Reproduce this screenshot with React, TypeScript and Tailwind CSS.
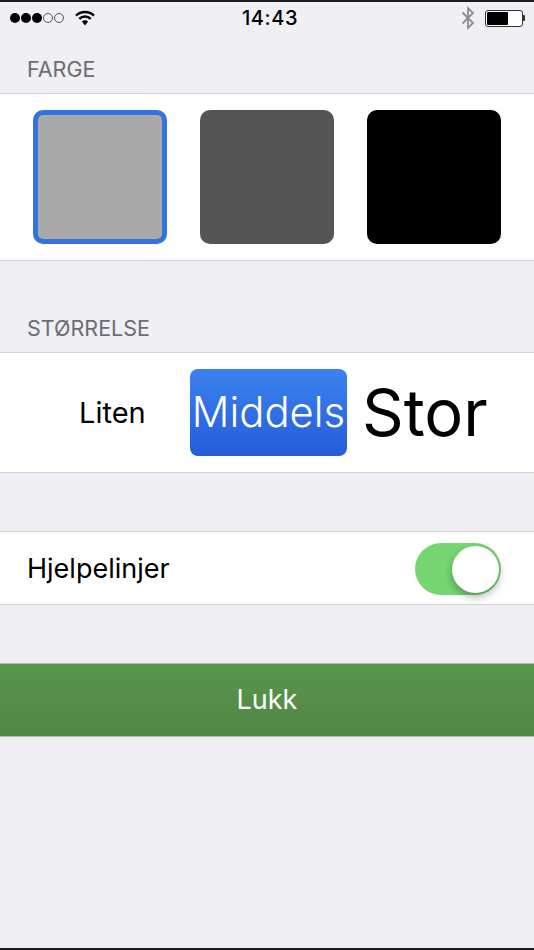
const font = "font-['Inter','Liberation_Sans',sans-serif]";

function StatusBar() {
  return (
    <div className="relative h-[36px] border-t-2 border-[#1c1c1e] pb-[2px] flex items-center justify-between pl-[10px] pr-[9px]">
      <div className="flex items-center gap-[1px]">
        <span className="w-[10px] h-[10px] rounded-full bg-black" />
        <span className="w-[10px] h-[10px] rounded-full bg-black" />
        <span className="w-[10px] h-[10px] rounded-full bg-black" />
        <span className="w-[10px] h-[10px] rounded-full border border-[#555]" />
        <span className="w-[10px] h-[10px] rounded-full border border-[#555]" />
        <svg width="20" height="16" viewBox="0 0 20 16" className="ml-[10px]">
          <path d="M1 5.6 A13 13 0 0 1 19 5.6" fill="none" stroke="#000" strokeWidth="2.4" />
          <path d="M4.3 8.8 A8.2 8.2 0 0 1 15.7 8.8" fill="none" stroke="#000" strokeWidth="2.4" />
          <path d="M6.9 11.6 A4.6 4.6 0 0 1 13.1 11.6 L10 15.6 Z" fill="#000" />
        </svg>
      </div>
      <span className="absolute left-[6px] right-0 text-center text-[20px] font-medium text-black tracking-[0.6px]">14:43</span>
      <div className="flex items-center gap-[10px]">
        <svg width="14" height="24" viewBox="0 0 14 24">
          <path d="M1.5 6.5 L12 17 L7 22 L7 2 L12 7 L1.5 17.5" fill="none" stroke="#8e8e93" strokeWidth="1.8" />
        </svg>
        <div className="flex items-center">
          <div className="w-[38px] h-[17px] rounded-[3px] border border-[#333] p-[1px] bg-white">
            <div className="w-[21px] h-full bg-black rounded-[1px]" />
          </div>
          <div className="w-[2px] h-[6px] bg-[#333] rounded-r-[1px]" />
        </div>
      </div>
    </div>
  );
}

export default function App() {
  return (
    <div className={`w-[534px] h-[950px] overflow-hidden bg-[#efeff4] flex flex-col border-b-2 border-[#1c1c1e] ${font}`}>
      <StatusBar />

      <div className="h-[57px] flex items-end pb-[12px] pl-[27px] text-[21.5px] leading-[24px] text-[#6d6d72]">FARGE</div>
      <div className="h-[168px] bg-white border-y border-[#d5d5d8] flex items-center pl-[33px] gap-[33px]">
        <div className="w-[134px] h-[134px] rounded-[10px] bg-[#a9a9a9] border-[5px] border-[#3273e0]" />
        <div className="w-[134px] h-[134px] rounded-[10px] bg-[#555555]" />
        <div className="w-[134px] h-[134px] rounded-[10px] bg-black" />
      </div>

      <div className="h-[91px] flex items-end pb-[12px] pl-[27px] text-[21.5px] leading-[24px] text-[#6d6d72]">STØRRELSE</div>
      <div className="h-[121px] bg-white border-y border-[#d5d5d8] flex items-center">
        <div className="w-[190px] pl-[79px] text-[29px] text-black">Liten</div>
        <div className="w-[157px] h-[87px] rounded-[8px] bg-gradient-to-b from-[#3c82ee] to-[#265cd9] flex items-center justify-center text-white text-[41.8px] font-light">Middels</div>
        <div className="pl-[15px] text-[65px] leading-none text-black">Stor</div>
      </div>

      <div className="h-[58px]" />
      <div className="h-[74px] pt-[2px] bg-white border-y border-[#d5d5d8] flex items-center justify-between pl-[27px] pr-[33px] text-[27px] text-black">
        <span>Hjelpelinjer</span>
        <div className="relative w-[86px] h-[52px] rounded-full bg-[#76d672] flex items-center justify-end pr-[2px]">
          <div className="w-[47px] h-[47px] rounded-full bg-white shadow-[0_4px_8px_rgba(0,0,0,0.3)]" />
        </div>
      </div>

      <div className="h-[58px]" />
      <div className="h-[74px] bg-gradient-to-b from-[#59954d] to-[#528745] border-y border-[#a9c3a4] flex items-center justify-center text-[27px] text-white">Lukk</div>
    </div>
  );
}
